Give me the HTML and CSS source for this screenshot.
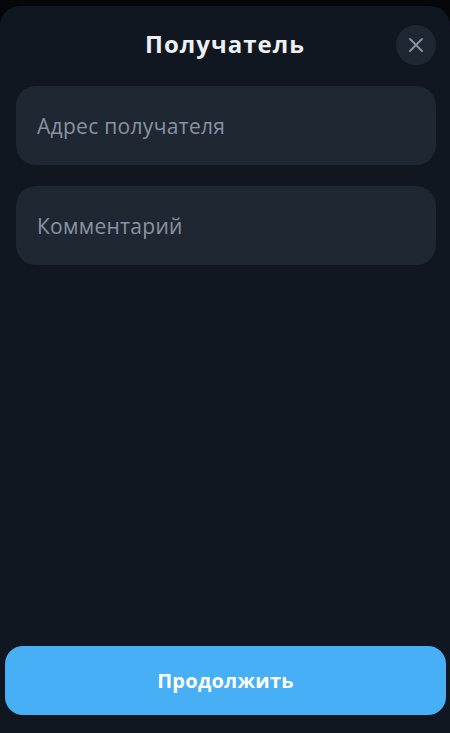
FILE: index.html
```html
<!DOCTYPE html>
<html lang="ru">
<head>
  <meta charset="UTF-8">
  <meta name="viewport" content="width=device-width, initial-scale=1.0">
  <title>Получатель</title>
  <link rel="stylesheet" href="styles.css">
</head>
<body>

  <div class="sheet">
    <div class="header">
      <h2 class="title">Получатель</h2>
      <button class="close" type="button" aria-label="Закрыть">
        <svg width="14" height="14" viewBox="0 0 14 14">
          <path d="M1 1L13 13M13 1L1 13" stroke="#8a94a3" stroke-width="1.8" stroke-linecap="round"/>
        </svg>
      </button>
    </div>

    <div class="fields">
      <input class="field" type="text" placeholder="Адрес получателя">
      <input class="field" type="text" placeholder="Комментарий">
    </div>

    <div class="footer">
      <button class="submit" type="button">Продолжить</button>
    </div>
  </div>

</body>
</html>
```

FILE: styles.css
```css
html, body {
  margin: 0;
  height: 100%;
}
body {
  font-family: "Open Sans", Arial, sans-serif;
  background-color: #05070b;
  padding-top: 6px;
  box-sizing: border-box;
}
.sheet {
  height: 727px;
  background: #111721;
  border-radius: 20px 20px 0 0;
  display: flex;
  flex-direction: column;
  box-sizing: border-box;
}
.header {
  position: relative;
  height: 80px;
  display: flex;
  align-items: center;
  justify-content: center;
}
.title {
  margin: 0;
  margin-top: -5px;
  font-size: 24px;
  font-weight: 700;
  letter-spacing: 1px;
  color: #eef0f3;
}
.close {
  position: absolute;
  right: 14px;
  top: 19px;
  width: 40px;
  height: 40px;
  border: none;
  border-radius: 50%;
  background: #1f2733;
  display: flex;
  align-items: center;
  justify-content: center;
  padding: 0;
}
.fields {
  display: flex;
  flex-direction: column;
  gap: 21px;
  padding: 0 14px 0 16px;
}
.field {
  height: 79px;
  border: none;
  border-radius: 20px;
  background: #1f2733;
  padding: 0 21px;
  font-family: "Open Sans", Arial, sans-serif;
  font-size: 21px;
  letter-spacing: 0.3px;
  color: #e6e9ee;
  outline: none;
}
.field::placeholder {
  color: #8a93a1;
}
.footer {
  margin-top: auto;
  padding: 0 4px 18px 5px;
}
.submit {
  width: 100%;
  height: 69px;
  border: none;
  border-radius: 18px;
  background: #47aff5;
  color: #ffffff;
  font-family: "Open Sans", Arial, sans-serif;
  font-size: 20px;
  font-weight: 700;
  letter-spacing: 0.3px;
}
```
